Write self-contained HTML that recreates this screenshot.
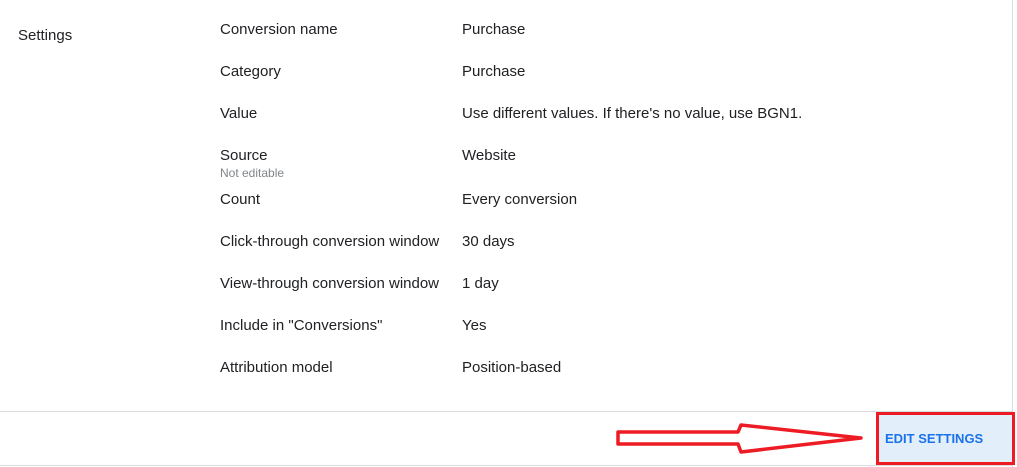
<html><head><style>
body{margin:0;width:1017px;height:467px;background:#fff;font-family:"Liberation Sans",sans-serif;font-size:15px;color:#202124;position:relative;overflow:hidden}
.t{position:absolute;white-space:nowrap;line-height:16px}
.s{font-size:12px;color:#80868b}
</style></head><body>
<div style="position:absolute;left:1012px;top:0;width:1px;height:467px;background:#dadce0"></div>
<div class="t" style="left:18px;top:28px">Settings</div>
<div class="t" style="left:220px;top:22px">Conversion name</div><div class="t" style="left:462px;top:22px">Purchase</div>
<div class="t" style="left:220px;top:64px">Category</div><div class="t" style="left:462px;top:64px">Purchase</div>
<div class="t" style="left:220px;top:106px">Value</div><div class="t" style="left:462px;top:106px">Use different values. If there's no value, use BGN1.</div>
<div class="t" style="left:220px;top:148px">Source</div><div class="t s" style="left:220px;top:165px">Not editable</div><div class="t" style="left:462px;top:148px">Website</div>
<div class="t" style="left:220px;top:192px">Count</div><div class="t" style="left:462px;top:192px">Every conversion</div>
<div class="t" style="left:220px;top:234px">Click-through conversion window</div><div class="t" style="left:462px;top:234px">30 days</div>
<div class="t" style="left:220px;top:276px">View-through conversion window</div><div class="t" style="left:462px;top:276px">1 day</div>
<div class="t" style="left:220px;top:318px">Include in "Conversions"</div><div class="t" style="left:462px;top:318px">Yes</div>
<div class="t" style="left:220px;top:360px">Attribution model</div><div class="t" style="left:462px;top:360px">Position-based</div>
<div style="position:absolute;left:0;top:411px;width:1013px;height:1px;background:#dadce0"></div>
<div style="position:absolute;left:0;top:465px;width:1013px;height:1px;background:#dadce0"></div>
<div style="position:absolute;left:876px;top:412px;width:133px;height:47px;border:3px solid #ed1c24;background:#e3eefb"></div>
<div class="t" style="left:885px;top:431px;color:#1a73e8;font-weight:bold;font-size:13px">EDIT SETTINGS</div>
<svg style="position:absolute;left:0;top:0" width="1017" height="467"><polygon points="618,432 738,432 741,425 861,438 741,452 738,444 618,444" fill="none" stroke="#ed1c24" stroke-width="3.5" stroke-linejoin="round"/></svg>
</body></html>
